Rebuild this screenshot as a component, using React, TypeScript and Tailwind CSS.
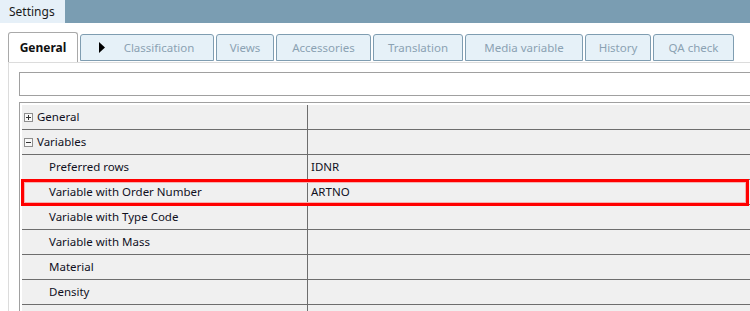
import React from "react";

const tabs = ["Classification", "Views", "Accessories", "Translation", "Media variable", "History", "QA check"];
const tabWidths = [134, 58, 95, 90, 118, 66, 81];

function Expander({ open }: { open: boolean }) {
  return (
    <svg width="9" height="9" viewBox="0 0 9 9" className="shrink-0">
      <rect x="0.5" y="0.5" width="8" height="8" fill="#f8f8f8" stroke="#8e8e8e" />
      <line x1="2" y1="4.5" x2="7" y2="4.5" stroke="#333" />
      {!open && <line x1="4.5" y1="2" x2="4.5" y2="7" stroke="#333" />}
    </svg>
  );
}

type Row = { label: string; value?: string; cat?: "open" | "closed" };
const rows: Row[] = [
  { label: "General", cat: "closed" },
  { label: "Variables", cat: "open" },
  { label: "Preferred rows", value: "IDNR" },
  { label: "Variable with Order Number", value: "ARTNO" },
  { label: "Variable with Type Code" },
  { label: "Variable with Mass" },
  { label: "Material" },
  { label: "Density" },
  { label: "" },
];

export default function App() {
  return (
    <div
      className="w-[750px] h-[311px] overflow-hidden bg-white text-[#10101e]"
      style={{ fontFamily: '"Noto Sans", "Open Sans", sans-serif' }}
    >
      <div className="flex h-[23px] bg-[#7a9db2]">
        <div className="w-[65px] bg-[#e6f0f8] flex items-center pl-[9px] text-[12px] text-[#1a1a1a]">Settings</div>
      </div>
      <div className="flex items-end pl-[8px] gap-[2px] h-[39px]">
        <div className="w-[70px] h-[30px] border border-b-0 border-[#a9a9a9] rounded-t-[3px] bg-white flex items-center justify-center font-bold text-[12px] text-[#111]">
          General
        </div>
        {tabs.map((t, i) => (
          <div
            key={t}
            className="h-[27px] mb-[1px] border border-[#7f9db1] rounded-t-[3px] bg-[#e6f1f8] flex items-center justify-center text-[11.5px] text-[#8ba2b3] relative"
            style={{ width: tabWidths[i] }}
          >
            {i === 0 && (
              <svg width="6" height="11" viewBox="0 0 6 11" className="absolute left-[18px] top-[7px]">
                <polygon points="0,0 6,5.5 0,11" fill="#000" />
              </svg>
            )}
            <span className={i === 0 ? "pl-[24px]" : ""}>{t}</span>
          </div>
        ))}
      </div>
      <div className="ml-[8px] border-l border-t border-[#dcdcdc] pl-[10px] pt-[9px] h-[260px]">
        <div className="h-[24px] border border-r-0 border-[#a0a0a0] bg-white" />
        <div className="mt-[6px] border-t border-l border-[#a0a0a0] pt-[2px] pl-[2px] relative">
          {rows.map((r, i) => (
            <div key={i} className="flex h-[25px] border-b border-[#6d6d6d] bg-[#f0f0f0] text-[11.5px]">
              <div className="w-[285px] flex items-center">
                {r.cat ? (
                  <div className="flex items-center pl-[2px] gap-[4px]">
                    <Expander open={r.cat === "open"} />
                    <span>{r.label}</span>
                  </div>
                ) : (
                  <span className="pl-[27px]">{r.label}</span>
                )}
              </div>
              <div className="flex-1 border-l border-[#6d6d6d] flex items-center pl-[3px]">{r.value}</div>
            </div>
          ))}
          <div className="absolute left-[1px] top-[76px] w-[728px] h-[27px] border-[3px] border-[#ff0000] shadow-[inset_0_0_0_1px_#f7b0b0]" />
        </div>
      </div>
    </div>
  );
}
